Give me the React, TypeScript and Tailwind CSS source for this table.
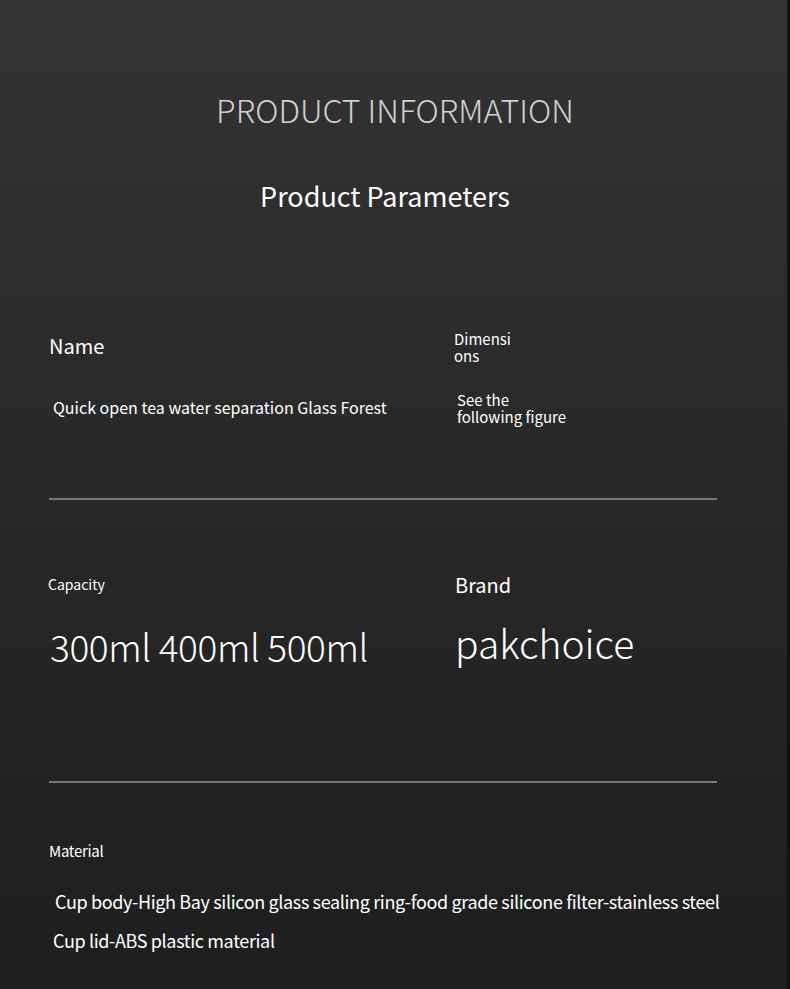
import React from "react";

const font = { fontFamily: '"Noto Sans CJK SC", "Noto Sans", sans-serif' };

export default function App() {
  return (
    <div
      className="relative w-[790px] h-[989px] overflow-hidden bg-gradient-to-b from-[#333333] via-[#282828] to-[#1e1e1e] text-white"
      style={font}
    >
      <div className="absolute right-0 top-0 h-full w-[3px] bg-[#121212]" />
      <div className="flex flex-col">
        <div className="pt-[87px] text-center text-[32px] font-light text-[#d0d0d0] leading-[44px]">
          PRODUCT INFORMATION
        </div>
        <div className="pt-[45px] pr-[20px] text-center text-[27px] leading-[40px] text-white">
          Product Parameters
        </div>

        <div className="mt-[117px] ml-[49px] w-[668px]">
          <div className="flex">
            <div className="w-[405px]">
              <div className="text-[20px] leading-[28px] -mt-[1px]">Name</div>
              <div className="mt-[35px] ml-[4px] text-[16px] leading-[24px]">
                Quick open tea water separation Glass Forest
              </div>
            </div>
            <div className="-mt-[3px]">
              <div className="w-[60px] text-[15px] leading-[17px] break-all">Dimensions</div>
              <div className="mt-[27px] ml-[3px] w-[120px] text-[15px] leading-[17px]">
                See the following figure
              </div>
            </div>
          </div>
          <div className="mt-[73px] h-[2px] bg-[#767676]" />

          <div className="flex mt-[74px]">
            <div className="w-[406px]">
              <div className="-ml-[1px] text-[14px] leading-[20px]">Capacity</div>
              <div className="mt-[27px] ml-[1px] text-[37px] font-light leading-[50px] tracking-[-0.01em]">
                300ml 400ml 500ml
              </div>
            </div>
            <div className="-mt-[3px]">
              <div className="text-[20px] leading-[28px]">Brand</div>
              <div className="mt-[16px] text-[39px] font-light leading-[54px]">pakchoice</div>
            </div>
          </div>
          <div className="mt-[110px] h-[2px] bg-[#767676]" />

          <div className="mt-[58px] text-[15px] leading-[20px] tracking-[-0.02em]">Material</div>
          <div className="mt-[27px] ml-[6px] text-[18px] leading-[26px] tracking-[-0.02em] whitespace-nowrap">
            Cup body-High Bay silicon glass sealing ring-food grade silicone filter-stainless steel
          </div>
          <div className="mt-[13px] ml-[4px] text-[18px] leading-[26px] tracking-[-0.02em]">
            Cup lid-ABS plastic material
          </div>
        </div>
      </div>
    </div>
  );
}
